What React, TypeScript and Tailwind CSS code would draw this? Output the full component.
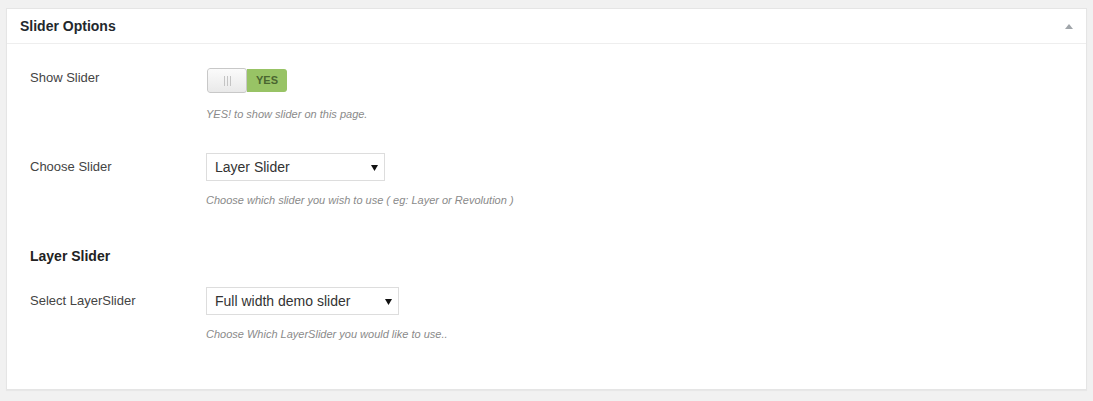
import React from 'react';

const font = { fontFamily: '"Liberation Sans", Arial, sans-serif' };

const Select: React.FC<{ value: string; width: string }> = ({ value, width }) => (
  <div className={`relative h-[28px] ${width}`}>
    <select
      defaultValue={value}
      className="h-full w-full appearance-none border border-[#dddddd] bg-white pl-[8px] pr-6 text-[14px] text-[#333333] outline-none"
    >
      <option>{value}</option>
    </select>
    <svg className="pointer-events-none absolute right-[7px] top-[12px]" width="7" height="6" viewBox="0 0 7 6">
      <path d="M0 0h7L3.5 6z" fill="#111" />
    </svg>
  </div>
);

const Desc: React.FC<{ children: React.ReactNode; className?: string }> = ({ children, className = '' }) => (
  <p className={`text-[11px] italic leading-[15px] text-[#8a8a8a] ${className}`}>{children}</p>
);

export default function App() {
  return (
    <div className="h-[401px] bg-[#f1f1f1] px-[6px] pt-[8px]" style={font}>
      <div className="border border-[#e5e5e5] bg-white shadow-[0_1px_1px_rgba(0,0,0,0.04)]">
        <div className="flex h-[35px] items-center justify-between border-b border-[#eeeeee] pl-[13px] pr-[13px]">
          <h2 className="text-[14px] font-bold leading-[34px] text-[#23282d]">Slider Options</h2>
          <svg width="8" height="5" viewBox="0 0 8 5" className="mt-[1px]">
            <path d="M0 5L4 0l4 5z" fill="#a0a5aa" />
          </svg>
        </div>

        <div className="pb-[47px] pl-[23px] pt-[24px] text-[13px] text-[#444444]">
          <div className="flex">
            <div className="w-[176px] leading-[19px]">Show Slider</div>
            <div>
              <div className="ml-px flex h-[25px] w-[80px] overflow-hidden rounded-[3px]">
                <div className="flex w-[40px] items-center justify-center gap-[2px] rounded-[3px] border border-[#c8c8c8] bg-gradient-to-b from-[#fbfbfb] to-[#e9e9e9]">
                  <span className="h-[10px] w-px bg-[#c4c4c4]" />
                  <span className="h-[10px] w-px bg-[#c4c4c4]" />
                  <span className="h-[10px] w-px bg-[#c4c4c4]" />
                </div>
                <div className="my-px flex flex-1 items-center justify-center rounded-r-[3px] bg-[#98c365] text-[11px] font-bold text-[#4a6630]">
                  YES
                </div>
              </div>
              <Desc className="mt-[14px]">YES! to show slider on this page.</Desc>
            </div>
          </div>

          <div className="mt-[31px] flex">
            <div className="w-[176px] leading-[28px]">Choose Slider</div>
            <div>
              <Select value="Layer Slider" width="w-[179px]" />
              <Desc className="mt-[12px]">Choose which slider you wish to use ( eg: Layer or Revolution )</Desc>
            </div>
          </div>

          <h3 className="mt-[39px] text-[14px] font-bold leading-[18px] text-[#222222]">Layer Slider</h3>

          <div className="mt-[22px] flex">
            <div className="w-[176px] leading-[28px]">Select LayerSlider</div>
            <div>
              <Select value="Full width demo slider" width="w-[193px]" />
              <Desc className="mt-[12px]">Choose Which LayerSlider you would like to use..</Desc>
            </div>
          </div>
        </div>
      </div>
    </div>
  );
}
